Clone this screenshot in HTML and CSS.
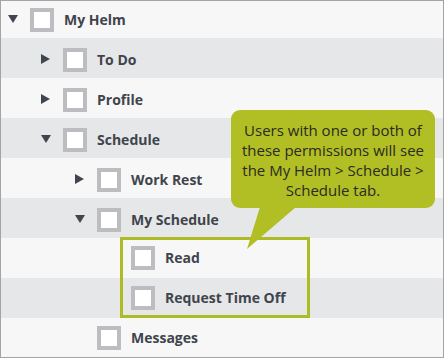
FILE: index.html
```html
<!DOCTYPE html>
<html>
<head>
<meta charset="utf-8">
<link rel="stylesheet" href="styles.css">
</head>
<body>
<div class="tree">
  <div class="row first l0 odd"><span class="slot"><span class="caret down"></span></span><span class="box"></span><span class="label">My Helm</span></div>
  <div class="row l1 even"><span class="slot"><span class="caret right"></span></span><span class="box"></span><span class="label">To Do</span></div>
  <div class="row l1 odd"><span class="slot"><span class="caret right"></span></span><span class="box"></span><span class="label">Profile</span></div>
  <div class="row l1 even"><span class="slot"><span class="caret down"></span></span><span class="box"></span><span class="label">Schedule</span></div>
  <div class="row l2 odd"><span class="slot"><span class="caret right"></span></span><span class="box"></span><span class="label">Work Rest</span></div>
  <div class="row l2 even"><span class="slot"><span class="caret down"></span></span><span class="box"></span><span class="label">My Schedule</span></div>
  <div class="row l3 odd centered"><span class="slot"></span><span class="box"></span><span class="label">Read</span></div>
  <div class="row l3 even centered"><span class="slot"></span><span class="box"></span><span class="label">Request Time Off</span></div>
  <div class="row l2 odd centered"><span class="slot"></span><span class="box"></span><span class="label">Messages</span></div>

  <div class="group-outline"></div>
  <div class="bubble">
    <p class="bubble-text">Users with one or both of these permissions will see the My Helm &gt; Schedule &gt; Schedule tab.</p>
    <svg class="tail" width="60" height="45" viewBox="0 0 60 45"><polygon points="14,0 50,0 1,42" fill="#b1be24"/></svg>
  </div>
</div>
</body>
</html>
```
FILE: styles.css
```css
* { box-sizing: border-box; }
html, body { margin: 0; padding: 0; }
body { background: #f7f7f7; }

.tree {
  position: relative;
  width: 444px;
  height: 358px;
  border: 1px solid #a4a4a4;
  overflow: hidden;
  font-family: "Open Sans", "DejaVu Sans", sans-serif;
}

.row {
  display: flex;
  align-items: center;
  height: 40px;
  padding-top: 3px;
}
.row.first { height: 37px; padding-top: 1px; }
.row.centered { padding-top: 0; }
.odd { background: #f7f7f7; }
.even { background: #e6e7e9; }

.l0 { padding-left: 7px; }
.l1 { padding-left: 40px; }
.l2 { padding-left: 74px; }
.l3 { padding-left: 108px; }

.slot {
  width: 22px;
  flex-shrink: 0;
  display: flex;
  align-items: center;
  height: 24px;
  margin-top: -2px;
}
.caret { display: block; width: 0; height: 0; }
.caret.down {
  border-left: 5px solid transparent;
  border-right: 5px solid transparent;
  border-top: 8px solid #41464e;
}
.caret.right {
  border-top: 5px solid transparent;
  border-bottom: 5px solid transparent;
  border-left: 9px solid #41464e;
}

.box {
  width: 24px;
  height: 24px;
  flex-shrink: 0;
  border: 4px solid #bdbdc1;
  background: #ffffff;
}

.label {
  margin-left: 10px;
  font-size: 14px;
  font-weight: 700;
  color: #40444c;
  line-height: 20px;
}

.group-outline {
  position: absolute;
  left: 119px;
  top: 236px;
  width: 190px;
  height: 81px;
  border: 3px solid #adbb24;
}

.bubble {
  position: absolute;
  left: 230px;
  top: 109px;
  width: 204px;
  height: 98px;
  background: #b1be24;
  border-radius: 9px;
  padding: 10px 8px 8px;
}
.bubble-text {
  margin: 0;
  text-align: center;
  font-size: 15px;
  line-height: 20px;
  color: #2b2b22;
  font-weight: 400;
}
.tail {
  position: absolute;
  left: 15px;
  top: 97px;
  display: block;
}
```
